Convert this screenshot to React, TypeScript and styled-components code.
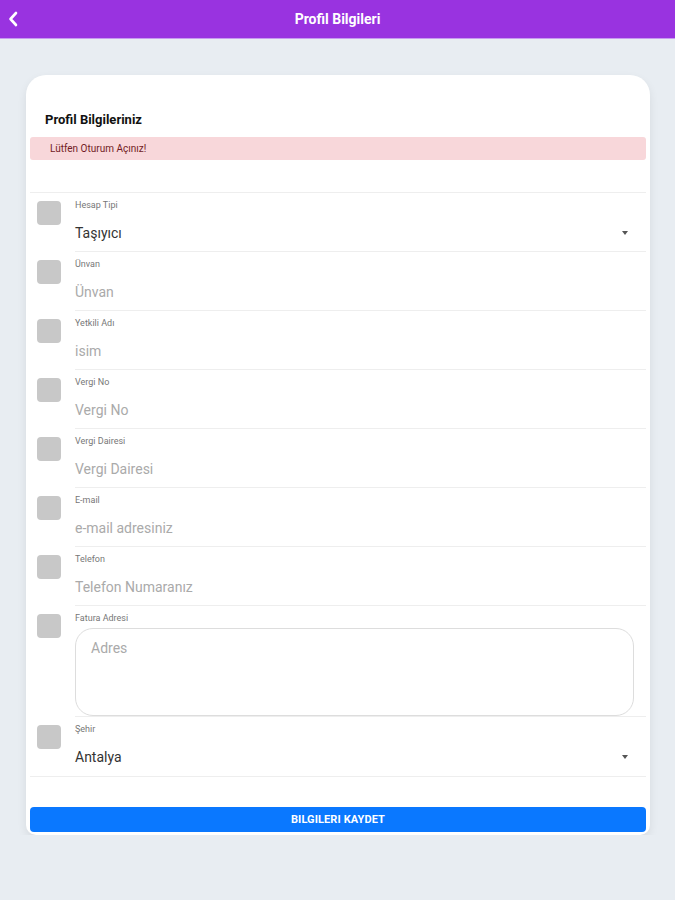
import React, { FunctionComponent } from 'react';
import styled, { createGlobalStyle } from 'styled-components';

const purple = '#9933e0';
const blue = '#0a78ff';

const GlobalStyle = createGlobalStyle`
  html, body {
    margin: 0;
    padding: 0;
    background: #e8edf2;
    font-family: Roboto, 'Noto Sans', Arial, sans-serif;
  }
  * { box-sizing: border-box; }
`;

const Header = styled.header`
  height: 39px;
  background: ${purple};
  border-bottom: 1px solid #c79bf0;
  display: flex;
  align-items: center;
  justify-content: center;
  position: relative;
  color: #fff;
`;

const Title = styled.div`
  font-size: 14px;
  font-weight: 700;
`;

const Back = styled.div`
  position: absolute;
  left: 7px;
  top: 11px;
  display: flex;
`;

const Page = styled.main`
  padding: 36px 25px 0 26px;
`;

const Card = styled.section`
  background: #fff;
  border-radius: 20px 20px 10px 10px;
  padding: 37px 4px 3px 4px;
  box-shadow: 0 4px 10px rgba(0, 0, 0, 0.08);
`;

const CardTitle = styled.div`
  font-size: 13px;
  font-weight: 700;
  color: #111;
  padding-left: 15px;
  margin-bottom: 10px;
`;

const Alert = styled.div`
  background: #f8d7da;
  color: #721c24;
  font-size: 10px;
  height: 23px;
  line-height: 23px;
  padding-left: 20px;
  border-radius: 3px;
`;

const List = styled.div`
  margin-top: 32px;
  border-top: 1px solid #eee;
  border-bottom: 1px solid #eee;
`;

const Row = styled.div`
  display: flex;
`;

const CheckCell = styled.div`
  width: 45px;
  flex-shrink: 0;
  padding: 8px 0 0 7px;
`;

const Check = styled.div`
  width: 24px;
  height: 24px;
  border-radius: 4px;
  background: #c8c8c8;
`;

const Content = styled.div<{ $last?: boolean; $area?: boolean }>`
  flex: 1;
  padding: 6px 0 ${(p) => (p.$area ? 0 : p.$last ? 6 : 5)}px 0;
  border-bottom: ${(p) => (p.$last ? 'none' : '1px solid #eee')};
`;

const Label = styled.div`
  font-size: 9px;
  line-height: 12px;
  color: #777;
`;

const Value = styled.div<{ $placeholder?: boolean }>`
  margin-top: 8px;
  height: 27px;
  display: flex;
  align-items: center;
  justify-content: space-between;
  padding-right: 18px;
  font-size: 14px;
  color: ${(p) => (p.$placeholder ? '#aaa' : '#333')};
`;

const Caret = styled.span`
  width: 0;
  height: 0;
  border-left: 3.5px solid transparent;
  border-right: 3.5px solid transparent;
  border-top: 4px solid #555;
`;

const TextArea = styled.div`
  margin: 4px 12px 0 0;
  height: 88px;
  border: 1px solid #ddd;
  border-radius: 18px;
  padding: 11px 15px;
  font-size: 14px;
  color: #aaa;
`;

const SaveButton = styled.button`
  display: block;
  width: 100%;
  margin-top: 30px;
  height: 25px;
  border: none;
  border-radius: 4px;
  background: ${blue};
  color: #fff;
  font-family: Roboto, Arial, sans-serif;
  font-size: 11px;
  font-weight: 700;
  letter-spacing: 0.1px;
`;

interface FieldProps {
  label: string;
  value: string;
  placeholder?: boolean;
  select?: boolean;
  last?: boolean;
}

const Field: FunctionComponent<FieldProps> = ({ label, value, placeholder, select, last }) => (
  <Row>
    <CheckCell>
      <Check />
    </CheckCell>
    <Content $last={last}>
      <Label>{label}</Label>
      <Value $placeholder={placeholder}>
        <span>{value}</span>
        {select && <Caret />}
      </Value>
    </Content>
  </Row>
);

const fields = [
  { label: 'Ünvan', value: 'Ünvan' },
  { label: 'Yetkili Adı', value: 'isim' },
  { label: 'Vergi No', value: 'Vergi No' },
  { label: 'Vergi Dairesi', value: 'Vergi Dairesi' },
  { label: 'E-mail', value: 'e-mail adresiniz' },
  { label: 'Telefon', value: 'Telefon Numaranız' },
];

export default function App() {
  return (
    <>
      <GlobalStyle />
      <Header>
        <Back>
          <svg width="12" height="16" viewBox="0 0 12 16">
            <path d="M9 2 L3.5 8 L9 14" fill="none" stroke="#fff" strokeWidth="2.6" strokeLinecap="round" strokeLinejoin="round" />
          </svg>
        </Back>
        <Title>Profil Bilgileri</Title>
      </Header>
      <Page>
        <Card>
          <CardTitle>Profil Bilgileriniz</CardTitle>
          <Alert>Lütfen Oturum Açınız!</Alert>
          <List>
            <Field label="Hesap Tipi" value="Taşıyıcı" select />
            {fields.map((f) => (
              <Field key={f.label} label={f.label} value={f.value} placeholder />
            ))}
            <Row>
              <CheckCell>
                <Check />
              </CheckCell>
              <Content $area>
                <Label>Fatura Adresi</Label>
                <TextArea>Adres</TextArea>
              </Content>
            </Row>
            <Field label="Şehir" value="Antalya" select last />
          </List>
          <SaveButton>BILGILERI KAYDET</SaveButton>
        </Card>
      </Page>
    </>
  );
}
